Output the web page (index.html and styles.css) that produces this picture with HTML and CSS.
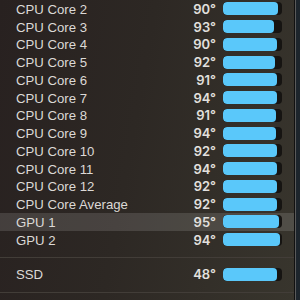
FILE: index.html
```html
<!DOCTYPE html>
<html>
<head>
<meta charset="utf-8">
<link rel="stylesheet" href="styles.css">
</head>
<body>
<div class="screen">
  <div class="panel">
    <div class="group">
      <div class="row"><span class="label">CPU Core 2</span><span class="value">90°</span><span class="track"><span class="fill" style="width:54.7px"></span></span></div>
      <div class="row"><span class="label">CPU Core 3</span><span class="value">93°</span><span class="track"><span class="fill" style="width:51px"></span></span></div>
      <div class="row"><span class="label">CPU Core 4</span><span class="value">90°</span><span class="track"><span class="fill" style="width:53.7px"></span></span></div>
      <div class="row"><span class="label">CPU Core 5</span><span class="value">92°</span><span class="track"><span class="fill" style="width:52.3px"></span></span></div>
      <div class="row"><span class="label">CPU Core 6</span><span class="value">91°</span><span class="track"><span class="fill" style="width:53.7px"></span></span></div>
      <div class="row"><span class="label">CPU Core 7</span><span class="value">94°</span><span class="track"><span class="fill" style="width:53.7px"></span></span></div>
      <div class="row"><span class="label">CPU Core 8</span><span class="value">91°</span><span class="track"><span class="fill" style="width:53px"></span></span></div>
      <div class="row"><span class="label">CPU Core 9</span><span class="value">94°</span><span class="track"><span class="fill" style="width:53.3px"></span></span></div>
      <div class="row"><span class="label">CPU Core 10</span><span class="value">92°</span><span class="track"><span class="fill" style="width:54.3px"></span></span></div>
      <div class="row"><span class="label">CPU Core 11</span><span class="value">94°</span><span class="track"><span class="fill" style="width:53.7px"></span></span></div>
      <div class="row"><span class="label">CPU Core 12</span><span class="value">92°</span><span class="track"><span class="fill" style="width:54.3px"></span></span></div>
      <div class="row"><span class="label">CPU Core Average</span><span class="value">92°</span><span class="track"><span class="fill" style="width:53.7px"></span></span></div>
      <div class="row row-active"><span class="label">GPU 1</span><span class="value">95°</span><span class="track"><span class="fill" style="width:56px"></span></span></div>
      <div class="row"><span class="label">GPU 2</span><span class="value">94°</span><span class="track"><span class="fill" style="width:57px"></span></span></div>
    </div>
    <div class="separator"></div>
    <div class="group group-ssd">
      <div class="row"><span class="label">SSD</span><span class="value">48°</span><span class="track"><span class="fill" style="width:53.7px"></span></span></div>
    </div>
    <div class="separator"></div>
  </div>
  <div class="edge"></div>
  <div class="desktop"></div>
</div>
</body>
</html>
```

FILE: styles.css
```css
html, body {
  margin: 0;
  padding: 0;
  background: #1d252c;
}

.screen {
  display: flex;
  width: 300px;
  height: 300px;
  overflow: hidden;
}

.panel {
  width: 294px;
  flex: none;
  display: flex;
  flex-direction: column;
  background: linear-gradient(100deg, #282120 0%, #2d2824 45%, #38352d 100%);
  font-family: "Liberation Sans", Arial, sans-serif;
  font-size: 13.2px;
  color: #dcd9d6;
}

.group {
  display: flex;
  flex-direction: column;
}

.group-ssd {
  padding: 8px 0 8.5px;
}

.row {
  height: 17.75px;
  display: grid;
  grid-template-columns: 1fr auto 59px;
  column-gap: 7px;
  align-items: center;
  padding: 0 12px 0 16px;
}

.row-active {
  background: rgba(255, 255, 255, 0.13);
}

.label {
  white-space: nowrap;
  line-height: 1;
  padding-top: 1px;
}

.value {
  font-family: Inter, "Liberation Sans", sans-serif;
  font-weight: 600;
  font-size: 13px;
  color: #e2e0de;
  line-height: 1;
  padding-top: 1px;
}

.track {
  display: block;
  height: 13px;
  border-radius: 4px;
  background: #161412;
  overflow: hidden;
}

.fill {
  display: block;
  height: 100%;
  border-radius: 4px;
  background: #5ac8fa;
}

.separator {
  height: 1px;
  background: #423d38;
  margin-top: 8px;
}

.group-ssd + .separator {
  margin-top: 0;
}

.edge {
  width: 2px;
  flex: none;
  background: linear-gradient(90deg, #111 0 50%, #5a5a5a 50% 100%);
}

.desktop {
  flex: 1;
  background: #1d252c;
}
```
